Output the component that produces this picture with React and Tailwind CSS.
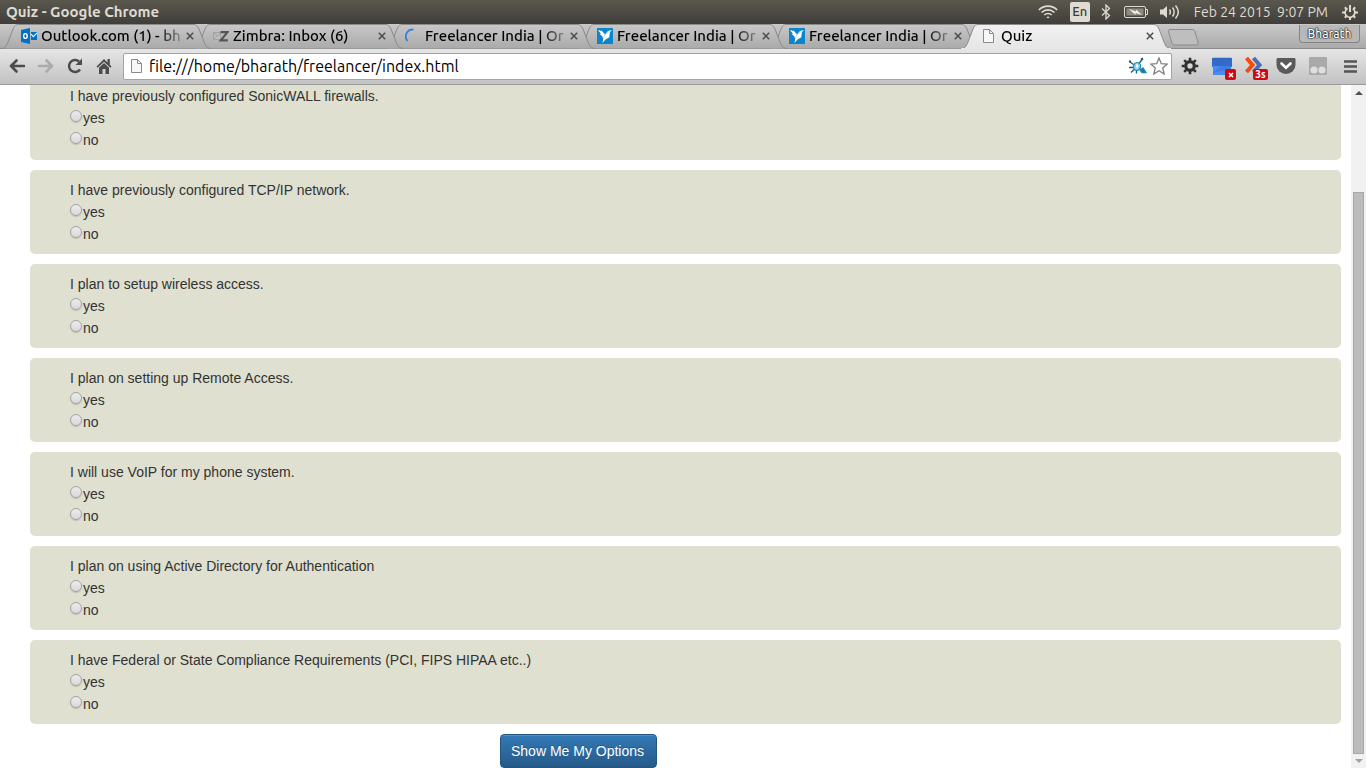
import React from "react";

const tabs = [
  { icon: "outlook", title: "Outlook.com (1) - bh" },
  { icon: "zimbra", title: "Zimbra: Inbox (6)" },
  { icon: "spinner", title: "Freelancer India | Or" },
  { icon: "bird", title: "Freelancer India | Or" },
  { icon: "bird", title: "Freelancer India | Or" },
  { icon: "page", title: "Quiz", active: true },
];

const questions = [
  "I have previously configured SonicWALL firewalls.",
  "I have previously configured TCP/IP network.",
  "I plan to setup wireless access.",
  "I plan on setting up Remote Access.",
  "I will use VoIP for my phone system.",
  "I plan on using Active Directory for Authentication",
  "I have Federal or State Compliance Requirements (PCI, FIPS HIPAA etc..)",
];

function PageIcon() {
  return (
    <svg className="h-4 w-4 shrink-0" viewBox="0 0 16 16" fill="#f7f7f7" stroke="#8a8a8a">
      <path d="M2.500 1.500h6l4 4v9h-10z" />
      <path d="M8.500 1.500v4h4" fill="none" />
    </svg>
  );
}

function TabIcon({ name }) {
  if (name === "outlook")
    return (
      <svg className="h-4 w-4 shrink-0" viewBox="0 0 16 16">
        <path d="M0 2l9-2v16l-9-2z" fill="#0072c6" />
        <ellipse cx="4.400" cy="8" rx="1.800" ry="2.400" fill="none" stroke="#fff" strokeWidth="1.400" />
        <path d="M10 4h6v8h-6z" fill="#0072c6" />
        <path d="M10 6l2.300 2.600L16 5" fill="none" stroke="#fff" strokeWidth="1.100" />
      </svg>
    );
  if (name === "zimbra")
    return (
      <svg className="h-4 w-4 shrink-0" viewBox="0 0 16 16" fill="none">
        <path d="M.5 4.500h7v7h-7zM.5 4.500l4 4 3-4M.5 11.500l3-3.500" stroke="#a2a2a2" fill="#c0c0c0" />
        <path d="M7.500 4.200h7L7.800 12.400h7" stroke="#555" strokeWidth="2.200" />
      </svg>
    );
  if (name === "spinner")
    return (
      <svg className="h-4 w-4 shrink-0" viewBox="0 0 16 16" fill="none">
        <path d="M2.500 13A7 7 0 0 1 8.500 1.500" stroke="#3f7fd6" strokeWidth="1.900" />
      </svg>
    );
  if (name === "bird")
    return (
      <svg className="h-4 w-4 shrink-0" viewBox="0 0 16 16">
        <path d="M0 0h16v16H0z" fill="#0a87cc" />
        <path d="M1 2l4 1 3 3.500L11 3l4-1-2 2-.8 5.500-3.700 2L5.500 15l.8-4.500L5 8l-2-1.500.8-.8z" fill="#fff" />
        <path d="M8 6.500l-1.700 4M8 6.500l3.500-2" stroke="#8cc8ea" strokeWidth=".5" />
      </svg>
    );
  return <PageIcon />;
}

function CloseIcon() {
  return (
    <svg className="h-2 w-2" viewBox="0 0 8 8" stroke="#4c4c4c" strokeWidth="1.500">
      <path d="M.8.8l6.400 6.400M7.200.8L.8 7.200" />
    </svg>
  );
}

const stack = ["z-[6]", "z-[5]", "z-[4]", "z-[3]", "z-[2]", "z-[7]"];

function Tab({ tab, index }) {
  return (
    <div className={`relative flex h-[25px] w-48 shrink-0 items-center pb-px pl-[13px] ${stack[index]}`}>
      <svg className="absolute top-0 -left-2 h-[25px] w-[212px]" viewBox="0 0 212 25">
        <defs>
          <linearGradient id={`tab-${index}`} x1="0" y1="0" x2="0" y2="1">
            <stop offset="0" stopColor={tab.active ? "#f1f1f1" : "#c8c8c8"} />
            <stop offset="1" stopColor={tab.active ? "#e6e6e6" : "#aaaaaa"} />
          </linearGradient>
        </defs>
        <path
          d="M0 24.500C5 24.500 6 23 8 18L13 5C14.500 1.500 16 .5 19 .5H193C196 .5 197.500 1.500 199 5L204 18C206 23 207 24.500 212 24.500"
          fill={`url(#tab-${index})`}
          stroke="#8b8b8b"
        />
        {tab.active && <path d="M1 24.500H211" stroke="#e6e6e6" />}
      </svg>
      <div className="relative flex min-w-0 flex-1 items-center gap-1">
        <TabIcon name={tab.icon} />
        <span className="w-[141px] text-[15px] leading-5 font-medium whitespace-nowrap text-black [mask-image:linear-gradient(to_right,#000_116px,transparent_148px)]">
          {tab.title}
        </span>
        <button type="button" aria-label="Close tab" className="flex h-4 w-2 items-center justify-center">
          <CloseIcon />
        </button>
      </div>
    </div>
  );
}

function SystemBar() {
  return (
    <header className="flex h-6 items-center justify-between bg-linear-to-b from-[#5a584d] to-[#3f3e3a] pr-2 pl-1.5 text-[#dfdbd2]">
      <h1 className="text-[15px] leading-5 font-bold">Quiz - Google Chrome</h1>
      <div className="flex items-center">
        <svg className="mr-3 h-4 w-5" viewBox="0 0 20 16" fill="none" stroke="#dfdbd2" strokeWidth="1.600">
          <path d="M.8 6C6 .8 14 .8 19.200 6M3.500 8.500c3.700-3.500 9.300-3.500 13 0M6.300 11c2-2 5.400-2 7.400 0" />
          <path d="M8.500 13l1.500 1.500 1.500-1.500c-.8-.8-2.200-.8-3 0z" fill="#dfdbd2" stroke="none" />
        </svg>
        <span className="mr-2.5 flex h-5 w-5 items-center justify-center rounded-xs bg-[#dfdbd2] text-[13px] font-medium text-[#3c3b37]">
          En
        </span>
        <svg className="mr-3 h-4 w-3" viewBox="0 0 12 16" fill="none" stroke="#dfdbd2" strokeWidth="1.300">
          <path d="M2 4.500l7.500 7L6 15V1l3.500 3.500L2 11.500" />
        </svg>
        <svg className="mr-3 h-4 w-6" viewBox="0 0 24 16" fill="none" stroke="#dfdbd2">
          <rect x=".5" y="2.500" width="21" height="11" rx="1.500" />
          <rect x="2.500" y="4.500" width="17" height="7" fill="#8e8b83" stroke="none" />
          <path d="M22 5.500h1.500v5H22" />
          <path d="M5 5l7 2.500V5.500L18 11l-6.500-2v2z" fill="#f2efe8" stroke="none" />
        </svg>
        <svg className="mr-3.5 h-4 w-5" viewBox="0 0 20 16" fill="none" stroke="#dfdbd2" strokeWidth="1.500">
          <path d="M0 5.500h3L7 2v12l-4-3.500H0z" fill="#dfdbd2" stroke="none" />
          <path d="M9.500 5.500c1 1.500 1 3.500 0 5M12.500 3.500c2.200 2.500 2.200 6.500 0 9M15.500 1.500c3.500 4 3.500 9 0 13" />
        </svg>
        <span className="mr-3.5 text-[14px] leading-5 whitespace-pre">Feb 24 2015  9:07 PM</span>
        <svg className="h-4 w-4" viewBox="0 0 16 16" fill="none" stroke="#dfdbd2">
          <circle cx="8" cy="8.500" r="4.800" strokeWidth="1.800" strokeDasharray="24 6.160" transform="rotate(-54 8 8.500)" />
          <path d="M8 1v7" strokeWidth="2" />
          <path d="M2.800 3.300l1.700 1.700M13.200 3.300L11.500 5M0 8.500h3M16 8.500h-3M2.800 13.700L4.500 12M13.200 13.700L11.500 12M8 16v-3" strokeWidth="2" />
        </svg>
      </div>
    </header>
  );
}

function TabStrip() {
  return (
    <nav className="flex h-[25px] items-start overflow-hidden bg-linear-to-b from-[#c9c9c9] to-[#a9a9a9] pl-2 shadow-[inset_0_-1px_0_#8b8b8b]">
      {tabs.map((tab, i) => (
        <Tab key={i} tab={tab} index={i} />
      ))}
      <button type="button" aria-label="New tab" className="mt-[5px] ml-[7px]">
        <svg className="h-[17px] w-8" viewBox="0 0 32 17">
          <path d="M3 .5h22c2 0 2.500 1 3 2.500l3 10c.6 2-.2 3-2 3H8.500c-2 0-3-.8-3.600-2.500L1.500 3C1 1.500 1.500.5 3 .5z" fill="#bebebe" stroke="#8b8b8b" />
        </svg>
      </button>
      <button
        type="button"
        className="mt-px mr-1.5 ml-auto h-[18px] w-[61px] rounded-b border border-t-0 border-[#858585] bg-[#b8b8b8] text-[12px] leading-4 font-medium text-white [text-shadow:0_0_2px_#000,0_0_1px_#000,0_0_1px_#000]"
      >
        Bharath
      </button>
    </nav>
  );
}

function Toolbar() {
  return (
    <div className="flex h-9 items-center border-b border-[#9b9b9b] bg-linear-to-b from-[#e6e6e6] to-[#c2c2c2] pr-2 pb-px pl-[9px]">
      <button type="button" aria-label="Back" className="mr-[13px]">
        <svg className="h-4 w-4" viewBox="0 0 16 16" fill="none" stroke="#4c4c4c" strokeWidth="2.600">
          <path d="M15 8H2M7.500 2.500L2 8l5.500 5.500" strokeLinecap="round" strokeLinejoin="round" />
        </svg>
      </button>
      <button type="button" aria-label="Forward" className="mr-[13px]" disabled>
        <svg className="h-4 w-4" viewBox="0 0 16 16" fill="none" stroke="#ababab" strokeWidth="2.600">
          <path d="M1 8h13M8.500 2.500L14 8l-5.500 5.500" strokeLinecap="round" strokeLinejoin="round" />
        </svg>
      </button>
      <button type="button" aria-label="Reload" className="mr-[13px]">
        <svg className="h-4 w-4" viewBox="0 0 16 16" fill="none" stroke="#4c4c4c" strokeWidth="2.500">
          <path d="M13 11.500A6 6 0 1 1 12 3.500" />
          <path d="M15 .5v6.500H8.500z" fill="#4c4c4c" stroke="none" />
        </svg>
      </button>
      <button type="button" aria-label="Home" className="mr-[11px]">
        <svg className="h-4 w-4" viewBox="0 0 16 16" fill="#4c4c4c">
          <path d="M8 1L.5 8.500l1.200 1.200L8 3.700l6.300 6 1.200-1.200-1.700-1.800V1h-2.300v3.400z" />
          <path d="M8 5L3 9.800V16h3.500v-5h3v5H13V9.800z" />
        </svg>
      </button>
      <div className="flex h-[27px] min-w-0 flex-1 items-center gap-1 rounded-xs border border-[#a3a3a3] bg-white pr-[3px] pl-[5px]">
        <PageIcon />
        <input
          aria-label="Address"
          defaultValue="file:///home/bharath/freelancer/index.html"
          className="min-w-0 flex-1 bg-transparent text-[16px] leading-5 text-black outline-none"
        />
        <svg className="h-5 w-5" viewBox="0 0 20 20" fill="none" stroke="#2188ad" strokeWidth="1.300">
          <path d="M2 6l3.500 2.500M1 11.500h4M3 16.500l3-3M11.500 7l2.500-3.500M8.500 14.500v3" stroke="#1c5874" />
          <ellipse cx="9" cy="10.500" rx="3.600" ry="4" fill="#8ad5ec" transform="rotate(20 9 10.500)" />
          <path d="M9 8.500v3" stroke="#fff" strokeWidth="2" />
          <path d="M13 3.500l2-1M1 5.500h2" stroke="#1c5874" strokeWidth="2" />
          <path d="M12 14l3-2 3 4.500h-4z" fill="#1c7496" />
        </svg>
        <button type="button" aria-label="Bookmark this page" className="-ml-0.5">
          <svg className="h-[18px] w-[18px]" viewBox="0 0 18 18" fill="#fff" stroke="#808080" strokeWidth="1.300">
            <path d="M9 1l2.300 5.700 6 .4-4.600 3.900 1.500 6L9 13.700 3.800 17l1.500-6L.7 7.100l6-.4z" />
          </svg>
        </button>
      </div>
      <div className="ml-[9px] flex items-center gap-[13px]">
        <button type="button" aria-label="Settings">
          <svg className="h-[18px] w-[18px]" viewBox="0 0 18 18" fill="none" stroke="#303030">
            <circle cx="9" cy="9" r="4.300" strokeWidth="3.200" />
            <path d="M9 .7v3M9 14.300v3M.7 9h3M14.300 9h3M3.200 3.200l2 2M12.800 12.800l2 2M3.200 14.800l2-2M12.800 5.200l2-2" strokeWidth="2.600" />
          </svg>
        </button>
        <button type="button" aria-label="Calendar" className="relative">
          <svg className="h-5 w-5" viewBox="0 0 20 20">
            <path d="M1 1h18v2H1z" fill="#bcbcbc" />
            <path d="M0 2h20v9H0z" fill="#3569c8" />
            <path d="M1 10h18v9H1z" fill="#4a8cf4" />
            <path d="M1 17l8-7h10v3z" fill="#3f7ce4" />
          </svg>
          <span className="absolute top-[13px] left-[13px] flex h-[11px] w-[11px] items-center justify-center rounded-xs bg-[#cc0a12]">
            <svg className="h-1.5 w-1.5" viewBox="0 0 6 6" stroke="#fff" strokeWidth="1.600">
              <path d="M1 1l4 4M5 1L1 5" />
            </svg>
          </span>
        </button>
        <button type="button" aria-label="Page timer" className="relative">
          <svg className="h-5 w-[18px]" viewBox="0 0 18 20" fill="none" strokeWidth="4">
            <path d="M8.500 2l6 7-6 7" stroke="#4b6fae" />
            <path d="M1.500 2l6 7-6 7" stroke="#f7490b" />
          </svg>
          <span className="absolute top-[13px] left-2 flex h-[11px] w-[15px] items-center justify-center rounded-xs bg-[#cc0a12] text-[10px] leading-3 font-bold text-white">
            3s
          </span>
        </button>
        <button type="button" aria-label="Pocket">
          <svg className="h-[18px] w-5" viewBox="0 0 20 18">
            <path d="M2 1h16c1 0 1.500.6 1.500 1.500V8a9.500 9 0 0 1-19 0V2.500C.5 1.600 1 1 2 1z" fill="#5a5a5a" />
            <path d="M5.500 6.500L10 10.800l4.500-4.300" fill="none" stroke="#fff" strokeWidth="2.600" strokeLinecap="round" />
          </svg>
        </button>
        <button type="button" aria-label="Extension">
          <svg className="h-[18px] w-[18px]" viewBox="0 0 18 18">
            <rect width="18" height="18" rx="1" fill="#a9a9a9" />
            <circle cx="5" cy="13" r="3.600" fill="#dedede" />
            <circle cx="13" cy="13" r="3.600" fill="#dedede" />
          </svg>
        </button>
        <button type="button" aria-label="Menu" className="ml-0.5">
          <svg className="h-4 w-4" viewBox="0 0 16 16" stroke="#555" strokeWidth="2.600">
            <path d="M2 3.500h13M2 8.500h13M2 13.500h13" />
          </svg>
        </button>
      </div>
    </div>
  );
}

function Option({ name, value }) {
  return (
    <label className="flex h-[22px] items-start text-[14px] leading-[22px]">
      <input
        type="radio"
        name={name}
        value={value}
        className="mt-[3px] h-3 w-3 appearance-none rounded-full border border-[#a3a3a3] bg-linear-to-b from-[#ececec] to-[#d9d9d9] shadow-[0_1px_1px_#00000026] checked:bg-[#555]"
      />
      <span className="pl-px">{value}</span>
    </label>
  );
}

function Question({ text, index }) {
  return (
    <fieldset className="rounded-[5px] bg-[#dfe0d0] pt-2.5 pb-[9px] pl-10">
      <legend className="float-left w-full text-[14px] leading-5">{text}</legend>
      <div className="clear-both pt-px">
        <Option name={`question-${index}`} value="yes" />
        <Option name={`question-${index}`} value="no" />
      </div>
    </fieldset>
  );
}

export default function App() {
  return (
    <div className="flex h-screen flex-col overflow-hidden bg-white font-['Ubuntu','Noto_Sans',sans-serif]">
      <SystemBar />
      <TabStrip />
      <Toolbar />
      <div className="flex min-h-0 flex-1">
        <main className="flex min-w-0 flex-1 flex-col justify-end overflow-hidden pr-2.5 pl-[30px] font-['Liberation_Sans',Arial,sans-serif] text-[#333]">
          <form className="flex flex-col gap-2.5" onSubmit={(e) => e.preventDefault()}>
            {questions.map((q, i) => (
              <Question key={q} text={q} index={i} />
            ))}
            <div className="pl-[470px]">
              <button
                type="submit"
                className="block rounded border border-[#245580] bg-linear-to-b from-[#337ab7] to-[#265a88] py-1.5 pr-3 pl-2.5 text-[14px] leading-5 text-white shadow-[inset_0_1px_0_#ffffff26] [text-shadow:0_-1px_0_#00000033]"
              >
                Show Me My Options
              </button>
            </div>
          </form>
        </main>
        <aside className="flex w-[15px] shrink-0 flex-col items-center bg-[#f1f1f1]" aria-hidden="true">
          <svg className="mt-1.5 h-1 w-2" viewBox="0 0 8 4" fill="#505050">
            <path d="M4 0l4 4H0z" />
          </svg>
          <div className="mt-[97px] w-[11px] flex-1 border border-[#a8a8a8] bg-[#bcbcbc]" />
          <svg className="mt-[5px] mb-[5px] h-1 w-2" viewBox="0 0 8 4" fill="#a3a3a3">
            <path d="M0 0h8L4 4z" />
          </svg>
        </aside>
      </div>
    </div>
  );
}
